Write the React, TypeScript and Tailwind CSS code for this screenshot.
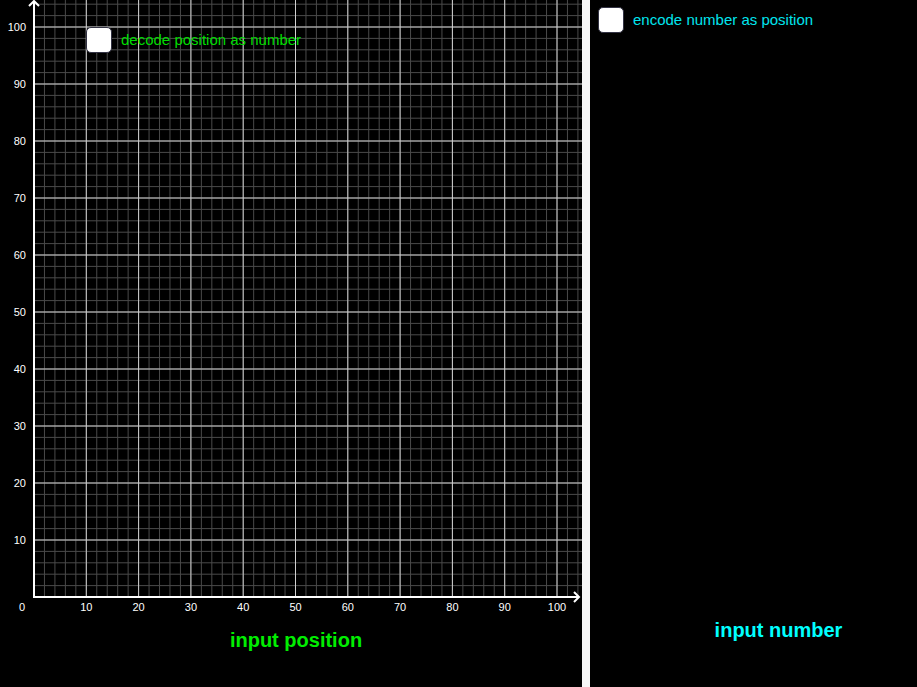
const OX = 34;
const OY = 597;
const SX = 5.23; // px per unit x
const SY = 5.7; // px per unit y
const W = 582;
const FONT = '"Liberation Sans", Arial, sans-serif';

function Graph() {
  const minorX: number[] = [];
  for (let u = 2; OX + u * SX < W; u += 2) minorX.push(OX + u * SX);
  const minorY: number[] = [];
  for (let u = 2; OY - u * SY > 0; u += 2) minorY.push(OY - u * SY);
  const ticks = [10, 20, 30, 40, 50, 60, 70, 80, 90, 100];
  return (
    <svg width={W} height={615} className="block" style={{ fontFamily: FONT }}>
      {minorX.map((x) => (
        <line key={'mx' + x} x1={x} y1={0} x2={x} y2={OY} stroke="#4a4a4a" strokeWidth={1} />
      ))}
      {minorY.map((y) => (
        <line key={'my' + y} x1={OX} y1={y} x2={W} y2={y} stroke="#4a4a4a" strokeWidth={1} />
      ))}
      {ticks.map((t) => (
        <g key={t}>
          <line x1={OX + t * SX} y1={0} x2={OX + t * SX} y2={OY} stroke="#d0d0d0" strokeWidth={1} />
          <line x1={OX} y1={OY - t * SY} x2={W} y2={OY - t * SY} stroke="#d0d0d0" strokeWidth={1} />
          <text x={OX + t * SX} y={611} fill="#fff" fontSize={11} textAnchor="middle">
            {t}
          </text>
          <text x={26} y={OY - t * SY + 4} fill="#fff" fontSize={11} textAnchor="end">
            {t}
          </text>
        </g>
      ))}
      <text x={22} y={611} fill="#fff" fontSize={11} textAnchor="middle">
        0
      </text>
      <line x1={OX} y1={1} x2={OX} y2={OY + 1} stroke="#fff" strokeWidth={2} />
      <line x1={OX - 1} y1={OY} x2={579} y2={OY} stroke="#fff" strokeWidth={2} />
      <path d="M29 6 L34 1 L39 6" stroke="#fff" strokeWidth={2} fill="none" />
      <path d="M574 592 L579 597 L574 602" stroke="#fff" strokeWidth={2} fill="none" />
    </svg>
  );
}

export default function App() {
  return (
    <div className="flex h-[687px] w-[917px] bg-black" style={{ fontFamily: FONT }}>
      <div className="relative w-[582px]">
        <Graph />
        <div className="absolute left-[86px] top-[27px] flex items-center gap-[9px]">
          <div className="h-[26px] w-[26px] rounded-[5px] border border-[#334] bg-white" />
          <span className="text-[15px] text-[#00dd00]">decode position as number</span>
        </div>
        <div className="pl-[10px] pt-[10px] text-center text-[20px] font-bold text-[#00ee00]">input position</div>
      </div>
      <div className="w-2 bg-[#f7f7f7]" />
      <div className="flex flex-1 flex-col px-2 pt-[7px]">
        <div className="flex items-center gap-[9px]">
          <div className="h-[26px] w-[26px] rounded-[5px] border border-[#334] bg-white" />
          <span className="text-[15px] text-[#00e5ee]">encode number as position</span>
        </div>
        <div className="mb-[42px] mt-auto pl-[50px] text-center text-[20px] font-bold text-[#00ffff]">input number</div>
      </div>
    </div>
  );
}
